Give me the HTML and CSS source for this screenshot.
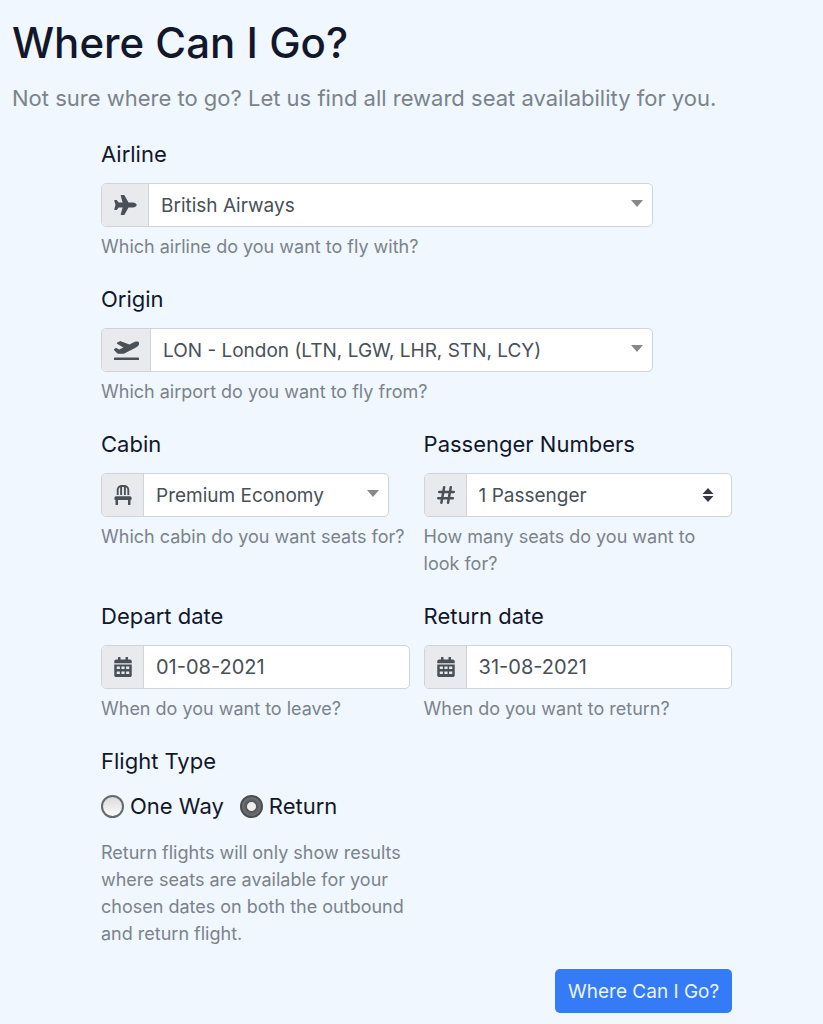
FILE: index.html
```html
<!DOCTYPE html>
<html lang="en">
<head>
<meta charset="utf-8">
<meta name="viewport" content="width=device-width, initial-scale=1">
<title>Where Can I Go?</title>
<link rel="stylesheet" href="styles.css">
</head>
<body>
<main class="page">
  <h1 class="title">Where Can I Go?</h1>
  <p class="lead">Not sure where to go? Let us find all reward seat availability for you.</p>
  <form class="search">
    <div class="field field-full">
      <label class="label" for="airline">Airline</label>
      <div class="group group-wide">
        <span class="addon"><svg class="icon" width="23" height="20" viewBox="0 0 576 512" aria-hidden="true"><path d="M480 192H365.700L260.600 8.100A16 16 0 0 0 246.700 0h-65.500c-10.600 0-18.300 10.200-15.400 20.400L214.900 192H112l-43.200-57.600c-3-4-7.800-6.400-12.800-6.400H16C5.600 128-2 137.800.5 147.900L32 256 .5 364.100C-2 374.200 5.600 384 16 384h40c5 0 9.800-2.400 12.800-6.400L112 320h102.900l-49 171.600c-2.900 10.200 4.800 20.400 15.400 20.400h65.500c5.700 0 11-3.100 13.900-8.100L365.700 320H480c35.300 0 96-28.700 96-64s-60.700-64-96-64z"/></svg></span>
        <span class="control"><select class="input" id="airline"><option>British Airways</option></select><span class="arrow"></span></span>
      </div>
      <p class="help">Which airline do you want to fly with?</p>
    </div>
    <div class="field field-full">
      <label class="label" for="origin">Origin</label>
      <div class="group group-wide">
        <span class="addon"><svg class="icon" width="25" height="20" viewBox="0 0 640 512" aria-hidden="true"><path d="M624 448H16c-8.800 0-16 7.200-16 16v32c0 8.800 7.200 16 16 16h608c8.800 0 16-7.200 16-16v-32c0-8.800-7.200-16-16-16zM80.600 341.300c6 6.500 14.500 10.200 23.400 10.100l132-.2a65 65 0 0 0 29.100-7L562.400 193c27.300-13.900 52.400-33.500 68.600-59.500 18.200-29.200 20.200-50.200 12.800-64.900s-25.700-25.500-60-27.800c-30.600-2-61.200 7.100-88.500 21L394.600 113 171 30a18 18 0 0 0-16 .5l-71 36.200c-11.600 5.900-14.100 21.500-5.100 31l161.800 93.200-106.500 54.200-74-37.300a18 18 0 0 0-16 .1L5.200 227.700c-11.400 5.800-14 21-5.200 30.500z"/></svg></span>
        <span class="control"><select class="input" id="origin"><option>LON - London (LTN, LGW, LHR, STN, LCY)</option></select><span class="arrow"></span></span>
      </div>
      <p class="help">Which airport do you want to fly from?</p>
    </div>
    <div class="field">
      <label class="label" for="cabin">Cabin</label>
      <div class="group group-cabin">
        <span class="addon"><svg class="icon" width="18" height="20" viewBox="0 0 448 512" aria-hidden="true"><path d="M112 128c0-29.500 16.200-55 40-68.900V256h48V48h48v208h48V59.100c23.800 13.900 40 39.400 40 68.900v128h48V128C384 57.300 326.700 0 256 0h-64C121.300 0 64 57.300 64 128v128h48zM446.300 341.900l-10.700-32c-4.400-13-16.600-21.900-30.400-21.900H42.800c-13.800 0-26 8.800-30.400 21.900l-10.700 32C-5.200 362.600 10.200 384 32 384v112c0 8.800 7.200 16 16 16h32c8.800 0 16-7.200 16-16V384h256v112c0 8.800 7.200 16 16 16h32c8.800 0 16-7.200 16-16V384c21.800 0 37.200-21.400 30.300-42.100z"/></svg></span>
        <span class="control"><select class="input" id="cabin"><option>Premium Economy</option></select><span class="arrow"></span></span>
      </div>
      <p class="help">Which cabin do you want seats for?</p>
    </div>
    <div class="field">
      <label class="label" for="passengers">Passenger Numbers</label>
      <div class="group">
        <span class="addon"><svg class="icon icon-line" width="18" height="20" viewBox="0 0 448 512" aria-hidden="true"><path d="M176 60l-70 392M346 60l-70 392M50 176h374M24 336h374"/></svg></span>
        <span class="control"><select class="input" id="passengers"><option>1 Passenger</option></select><svg class="updown" width="12" height="16" viewBox="0 0 12 16" aria-hidden="true"><path d="M6 1l5.500 6H.5zM6 15L.5 9h11z"/></svg></span>
      </div>
      <p class="help">How many seats do you want to look for?</p>
    </div>
    <div class="field">
      <label class="label" for="depart">Depart date</label>
      <div class="group">
        <span class="addon"><svg class="icon" width="18" height="20" viewBox="0 0 448 512" aria-hidden="true"><path fill-rule="evenodd" d="M0 192h448v272c0 26.500-21.500 48-48 48H48c-26.500 0-48-21.500-48-48zM64 240v64h80v-64zM184 240v64h80v-64zM304 240v64h80v-64zM64 368v64h80v-64zM184 368v64h80v-64zM304 368v64h80v-64zM448 160v-48c0-26.500-21.500-48-48-48h-48V12c0-6.600-5.400-12-12-12h-40c-6.600 0-12 5.400-12 12v52H160V12c0-6.600-5.400-12-12-12h-40c-6.600 0-12 5.400-12 12v52H48C21.500 64 0 85.500 0 112v48z"/></svg></span>
        <span class="control"><input class="input input-date" id="depart" type="text" value="01-08-2021"></span>
      </div>
      <p class="help">When do you want to leave?</p>
    </div>
    <div class="field">
      <label class="label" for="return-date">Return date</label>
      <div class="group">
        <span class="addon"><svg class="icon" width="18" height="20" viewBox="0 0 448 512" aria-hidden="true"><path fill-rule="evenodd" d="M0 192h448v272c0 26.500-21.500 48-48 48H48c-26.500 0-48-21.500-48-48zM64 240v64h80v-64zM184 240v64h80v-64zM304 240v64h80v-64zM64 368v64h80v-64zM184 368v64h80v-64zM304 368v64h80v-64zM448 160v-48c0-26.500-21.500-48-48-48h-48V12c0-6.600-5.400-12-12-12h-40c-6.600 0-12 5.400-12 12v52H160V12c0-6.600-5.400-12-12-12h-40c-6.600 0-12 5.400-12 12v52H48C21.500 64 0 85.500 0 112v48z"/></svg></span>
        <span class="control"><input class="input input-date" id="return-date" type="text" value="31-08-2021"></span>
      </div>
      <p class="help">When do you want to return?</p>
    </div>
    <fieldset class="field flight-type">
      <legend class="label">Flight Type</legend>
      <div class="radios">
        <label class="choice"><input class="radio" type="radio" name="type">One Way</label>
        <label class="choice"><input class="radio" type="radio" name="type" checked>Return</label>
      </div>
      <p class="help">Return flights will only show results where seats are available for your chosen dates on both the outbound and return flight.</p>
    </fieldset>
    <div class="actions"><button class="submit" type="submit">Where Can I Go?</button></div>
  </form>
</main>
</body>
</html>
```
FILE: styles.css
```css
* { box-sizing: border-box; }

body {
  margin: 0;
  background: #f0f7fe;
  color: #12172b;
  font-family: Inter, "Liberation Sans", sans-serif;
  font-size: 22px;
}

.page { padding: 16px 12px 12px; }

.title {
  margin: 0;
  font-size: 42px;
  font-weight: 500;
  line-height: 53px;
}

.lead {
  margin: 12px 0 23px;
  color: #7b838b;
  font-size: 22px;
  line-height: 34px;
}

.search {
  display: grid;
  grid-template-columns: 1fr 1fr;
  column-gap: 14px;
  row-gap: 23px;
  width: 79%;
  margin-left: 89px;
}

.field { min-width: 0; margin: 0; padding: 0; border: 0; }
.field-full { grid-column: 1 / -1; }

.label {
  display: block;
  margin-bottom: 12px;
  padding: 0;
  line-height: 33px;
}

.group {
  display: flex;
  height: 44px;
  overflow: hidden;
  border: 1px solid #ced4da;
  border-radius: 5px;
  background: #fff;
}

.group-wide { width: 552px; max-width: 100%; }
.group-cabin { width: 288px; max-width: 100%; }

.addon {
  display: flex;
  align-items: center;
  padding: 0 11px 0 12px;
  border-right: 1px solid #ced4da;
  background: #e9eaee;
  color: #495057;
}

.icon { display: block; fill: currentColor; }

.icon-line {
  fill: none;
  stroke: currentColor;
  stroke-width: 64px;
  stroke-linecap: round;
}

.control { position: relative; flex: 1; min-width: 0; }

.input {
  display: block;
  width: 100%;
  height: 100%;
  padding: 0 12px;
  border: 0;
  background: transparent;
  color: #495057;
  font: inherit;
  font-size: 19px;
  appearance: none;
}

.input-date { font-size: 20px; }

.arrow {
  position: absolute;
  top: 16px;
  right: 9px;
  border: 6px solid transparent;
  border-top: 7px solid #888;
  border-bottom: 0;
  pointer-events: none;
}

.updown {
  position: absolute;
  top: 13px;
  right: 17px;
  fill: #343a40;
  pointer-events: none;
}

.help {
  margin: 6px 0 0;
  color: #7b838b;
  font-size: 18px;
  line-height: 27px;
}

.radios { display: flex; gap: 16px; line-height: 33px; }
.choice { display: flex; align-items: center; gap: 6px; }

.radio {
  width: 23px;
  height: 23px;
  margin: 0;
  border: 2px solid #66686c;
  border-radius: 50%;
  background: linear-gradient(#dcdcdc, #fafafa);
  appearance: none;
}

.radio:checked {
  border-color: #4b4c50;
  background: radial-gradient(circle, #eee 4px, #55565a 5px, #707175 9px);
}

.flight-type .help { margin-top: 16px; }

.actions { grid-column: 1 / -1; margin-top: -1px; text-align: right; }

.submit {
  height: 44px;
  padding: 0 13px;
  border: 0;
  border-radius: 5px;
  background: #357af6;
  color: #e8f6ff;
  font: inherit;
  font-size: 19px;
}
```
